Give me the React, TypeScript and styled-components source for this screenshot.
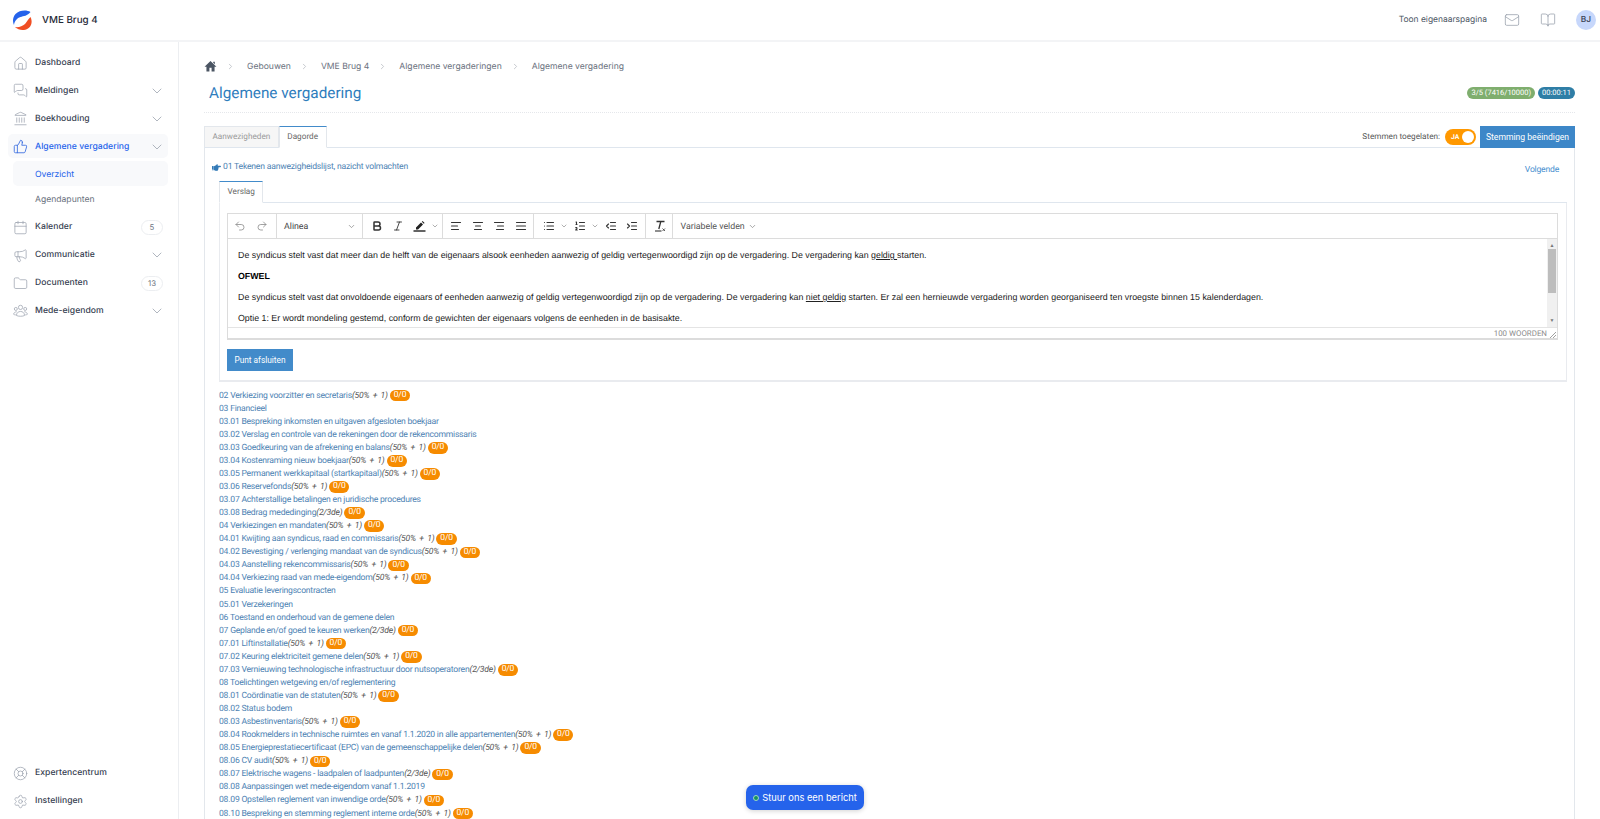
import React from "react";
import styled, { createGlobalStyle } from "styled-components";
import { FaHandPointRight } from "react-icons/fa";
import {
  AlignCenter,
  AlignJustify,
  AlignLeft,
  AlignRight,
  Bold,
  BookOpen,
  Calendar,
  ChevronDown,
  ChevronRight,
  Folder,
  Home,
  IndentDecrease,
  IndentIncrease,
  Italic,
  Landmark,
  LifeBuoy,
  List as ListIcon,
  ListOrdered,
  Mail,
  Megaphone,
  MessagesSquare,
  Redo2,
  Settings,
  ThumbsUp,
  Undo2,
} from "lucide-react";

const GlobalStyle = createGlobalStyle`
  html, body { margin: 0; padding: 0; background: #fff; }
  body {
    font-family: Roboto, "Liberation Sans", sans-serif;
    overflow: hidden;
    text-rendering: geometricPrecision;
  }
  * { box-sizing: border-box; }
`;

const Page = styled.div`
  width: 1600px;
  height: 819px;
  display: flex;
  flex-direction: column;
  overflow: hidden;
  position: relative;
`;

const Header = styled.header`
  height: 42px;
  flex: none;
  display: flex;
  align-items: center;
  border-bottom: 2px solid #f3f4f6;
  padding: 0 4px 0 12px;
`;

const Logo = styled.svg`
  width: 21px;
  height: 21px;
`;

const Brand = styled.div`
  margin-left: 9px;
  font: 500 9.8px Inter, sans-serif;
  color: #1f2937;
`;

const HeaderRight = styled.div`
  margin-left: auto;
  display: flex;
  align-items: center;
  color: #9ca3af;
`;

const OwnerLink = styled.span`
  font: 400 8.45px Inter, sans-serif;
  color: #4b5563;
  margin-right: 17px;
`;

const HeaderIcon = styled.span`
  display: flex;
  margin-right: 20px;
`;

const Avatar = styled.div`
  width: 20px;
  height: 20px;
  border-radius: 50%;
  background: #c7d7fb;
  color: #374151;
  font: 500 8.4px Inter, sans-serif;
  display: flex;
  align-items: center;
  justify-content: center;
`;

const Body = styled.div`
  flex: 1;
  min-height: 0;
  display: flex;
`;

const Sidebar = styled.aside`
  width: 179px;
  flex: none;
  border-right: 1px solid #eceef1;
  padding: 8px 10px 3px 8px;
  display: flex;
  flex-direction: column;
`;

const SideBottom = styled.div`
  margin-top: auto;
`;

const NavItem = styled.div<{ $active?: boolean }>`
  height: 24px;
  margin-bottom: 3.85px;
  padding: 2px 5px 0;
  border-radius: 5px;
  display: flex;
  align-items: center;
  background: ${({ $active }) => ($active ? "#f8f9fb" : "transparent")};
  color: ${({ $active }) => ($active ? "#2563eb" : "#374151")};
  font: 500 8.6px Inter, sans-serif;
  letter-spacing: 0.05px;
  svg.main {
    width: 15px;
    height: 15px;
    margin-right: 7px;
    flex: none;
    color: ${({ $active }) => ($active ? "#3b6fe0" : "#9ca3af")};
  }
  svg.chev {
    width: 16px;
    height: 16px;
    margin-left: auto;
    margin-right: -2px;
    color: #9ca3af;
  }
`;

const SubList = styled.div`
  margin-bottom: 3px;
`;

const SubItem = styled.div<{ $active?: boolean }>`
  height: 25px;
  margin: 0 0 0 5px;
  padding: 2px 0 0 22px;
  border-radius: 5px;
  display: flex;
  align-items: center;
  background: ${({ $active }) => ($active ? "#f8f9fb" : "transparent")};
  color: ${({ $active }) => ($active ? "#2563eb" : "#6b7280")};
  font: 400 8.6px Inter, sans-serif;
`;

const Count = styled.span`
  margin-left: auto;
  width: 22px;
  height: 15px;
  border: 1px solid #eceef1;
  border-radius: 8px;
  color: #6b7280;
  font: 400 7.8px Inter, sans-serif;
  display: flex;
  align-items: center;
  justify-content: center;
`;

const Main = styled.main`
  flex: 1;
  min-width: 0;
  padding: 0 25px 0 25px;
  overflow: hidden;
`;

const Breadcrumb = styled.div`
  height: 17px;
  margin-top: 16px;
  display: flex;
  align-items: center;
  color: #6b7280;
  font: 400 8.6px Inter, sans-serif;
  svg.sep { width: 9px; height: 9px; color: #b4b8bf; margin: 0 12px 0 9px; }
`;

const HomeGlyph = styled.svg`
  width: 13px;
  height: 13px;
  fill: #4b5563;
`;

const TitleRow = styled.div`
  height: 38px;
  padding: 0 0 0 5px;
  border-bottom: 1px dotted #e5e7eb;
  display: flex;
  align-items: center;
  justify-content: space-between;
`;

const Title = styled.h1`
  margin: -1px 0 0;
  font: 400 15.3px Roboto, sans-serif;
  color: #2f7dbd;
`;

const Pills = styled.div`
  display: flex;
  gap: 3px;
  margin-bottom: 2px;
`;

const Pill = styled.span<{ $color: string }>`
  height: 12px;
  padding: 0 4px;
  border-radius: 6px;
  background: ${({ $color }) => $color};
  color: #fff;
  font: 400 7.5px/12px Roboto, sans-serif;
`;

const TabRow = styled.div`
  height: 22px;
  margin-top: 13px;
  display: flex;
  align-items: flex-end;
  border-bottom: 1px solid #dfe6ee;
`;

const Tab = styled.div<{ $active?: boolean }>`
  height: 22px;
  margin-bottom: -1px;
  padding: 0 7.5px;
  display: flex;
  align-items: center;
  font: 400 8.2px Roboto, sans-serif;
  color: ${({ $active }) => ($active ? "#666" : "#9a9a9a")};
  background: ${({ $active }) => ($active ? "#fff" : "#f6f6f6")};
  border: 1px solid #e3e7ec;
  border-top: ${({ $active }) => ($active ? "1px solid #428bca" : "1px solid #e3e7ec")};
  border-bottom: ${({ $active }) => ($active ? "1px solid #fff" : "1px solid #dfe6ee")};
`;

const TabActions = styled.div`
  margin-left: auto;
  align-self: stretch;
  display: flex;
  align-items: center;
`;

const ToggleLabel = styled.span`
  font: 400 8.2px Roboto, sans-serif;
  color: #555;
  margin-right: 5px;
`;

const Toggle = styled.div`
  width: 31px;
  height: 16px;
  border-radius: 8px;
  background: #ff9800;
  color: #fff;
  font: 700 6.8px Roboto, sans-serif;
  display: flex;
  align-items: center;
  justify-content: space-between;
  padding: 0 2px 0 6px;
  margin-right: 4px;
  &::after {
    content: "";
    width: 12px;
    height: 12px;
    border-radius: 50%;
    background: #fff;
  }
`;

const EndButton = styled.button`
  height: 22px;
  width: 95px;
  border: none;
  background: #3d87c8;
  color: #fff;
  font: 400 8.6px Roboto, sans-serif;
  padding: 0;
`;

const Panel = styled.div`
  border-left: 1px solid #e3e7ec;
  border-right: 1px solid #e3e7ec;
  padding: 11px 7px 0 7px;
`;

const AgendaHead = styled.div`
  height: 14px;
  padding-top: 2px;
  display: flex;
  align-items: center;
  color: #4d82b3;
  font: 400 8.6px Roboto, sans-serif;
  letter-spacing: -0.2px;
  svg { width: 9px; height: 9px; color: #337ab7; margin-right: 2px; }
`;

const NextLink = styled.span`
  margin-left: auto;
  margin-right: 8px;
  margin-top: 6px;
  color: #4a90d0;
`;

const InnerTabs = styled.div`
  margin-top: 8px;
  margin-left: 7px;
  height: 22px;
  display: flex;
  border-bottom: 1px solid #dfe6ee;
`;

const InnerPanel = styled.div`
  margin-left: 7px;
  border: 1px solid #e9ebef;
  border-top: none;
  border-bottom-width: 2px;
  padding: 10px 8px 9px 7px;
`;

const Editor = styled.div`
  border: 1px solid #dcdcdc;
  border-bottom-width: 2px;
`;

const Toolbar = styled.div`
  height: 25px;
  display: flex;
  align-items: center;
  border-bottom: 1px solid #dcdcdc;
  color: #333;
  svg { width: 12px; height: 12px; flex: none; }
`;

const ToolGroup = styled.div<{ $gap?: number; $left?: number; $right?: number }>`
  height: 100%;
  display: flex;
  align-items: center;
  gap: ${({ $gap }) => $gap ?? 9}px;
  padding: 0 ${({ $right }) => $right ?? 7}px 0 ${({ $left }) => $left ?? 8}px;
  border-right: 1px solid #dcdcdc;
`;

const Caret = styled(ChevronDown)`
  && { width: 8px; height: 8px; color: #8a8a8a; margin: 0 -3px 0 -4px; }
`;

const PenIcon = styled.svg`
  && { width: 13px; height: 12px; }
`;

const FormatSelect = styled.div`
  width: 86px;
  height: 100%;
  padding: 1px 6px 0 7px;
  display: flex;
  align-items: center;
  justify-content: space-between;
  font: 400 8.8px Roboto, sans-serif;
  color: #444;
  border-right: 1px solid #dcdcdc;
  svg { width: 9px; height: 9px; color: #8a8a8a; }
`;

const VariableSelect = styled.div`
  padding: 1px 8px 0;
  display: flex;
  align-items: center;
  gap: 3px;
  font: 400 8.8px Roboto, sans-serif;
  color: #555;
  && svg { width: 9px; height: 9px; color: #8a8a8a; }
`;

const EditArea = styled.div`
  height: 89px;
  display: flex;
  border-bottom: 1px solid #e4e4e4;
  overflow: hidden;
`;

const EditText = styled.div`
  flex: 1;
  padding: 10px 10px 0;
  font: 400 8.83px/12px "Liberation Sans", sans-serif;
  color: #222;
  p { margin: 0 0 9px; white-space: nowrap; }
  b { color: #000; }
  u { text-underline-offset: 1px; }
`;

const ScrollBar = styled.div`
  width: 10px;
  background: #f0f0f0;
  display: flex;
  flex-direction: column;
  align-items: center;
  justify-content: space-between;
  padding: 4px 0 3px;
  color: #777;
  font-size: 5px;
  line-height: 6px;
  position: relative;
  &::after {
    content: "";
    position: absolute;
    left: 1px;
    right: 1px;
    top: 10px;
    height: 44px;
    background: #bdbdbd;
  }
`;

const StatusBar = styled.div`
  height: 10px;
  display: flex;
  justify-content: flex-end;
  align-items: center;
  padding-right: 10px;
  font: 400 7.9px Roboto, sans-serif;
  color: #8b8b8b;
  position: relative;
`;

const Grip = styled.svg`
  position: absolute;
  right: 1px;
  bottom: 0;
  width: 7px;
  height: 7px;
`;

const CloseButton = styled.button`
  display: block;
  margin-top: 9px;
  width: 66px;
  height: 22px;
  border: none;
  background: #428bca;
  color: #fff;
  font: 400 8.3px Roboto, sans-serif;
  padding: 0;
`;

const AgendaList = styled.div`
  margin: 7px 0 0 7px;
  font: 400 8.6px Roboto, sans-serif;
  letter-spacing: -0.22px;
  color: #4d82b3;
`;

const AgendaRow = styled.div`
  height: 13.07px;
  display: flex;
  align-items: center;
  white-space: pre;
  em { color: #555; font-style: italic; word-spacing: 1.5px; }
`;

const Score = styled.span`
  margin-left: 2px;
  height: 11.5px;
  padding: 0 4px;
  border-radius: 6px;
  background: #f68b00;
  color: #fff;
  font: 400 8.5px/11.5px Roboto, sans-serif;
`;

const ChatButton = styled.button`
  position: absolute;
  left: 746px;
  bottom: 9px;
  width: 118px;
  height: 25px;
  border: none;
  border-radius: 7px;
  background: #2563eb;
  color: #fff;
  font: 400 9.3px Inter, sans-serif;
  display: flex;
  align-items: center;
  justify-content: center;
  gap: 3px;
  box-shadow: 0 1px 5px rgba(0, 0, 0, 0.18);
  padding: 0;
`;

const Dot = styled.span`
  width: 6px;
  height: 6px;
  border-radius: 50%;
  background: #16915f;
  border: 1px solid #9fd8c0;
`;

const agenda: [string, string?][] = [
  ["02 Verkiezing voorzitter en secretaris", "50% + 1"],
  ["03 Financieel"],
  ["03.01 Bespreking inkomsten en uitgaven afgesloten boekjaar"],
  ["03.02 Verslag en controle van de rekeningen door de rekencommissaris"],
  ["03.03 Goedkeuring van de afrekening en balans", "50% + 1"],
  ["03.04 Kostenraming nieuw boekjaar", "50% + 1"],
  ["03.05 Permanent werkkapitaal (startkapitaal)", "50% + 1"],
  ["03.06 Reservefonds", "50% + 1"],
  ["03.07 Achterstallige betalingen en juridische procedures"],
  ["03.08 Bedrag mededinging", "2/3de"],
  ["04 Verkiezingen en mandaten", "50% + 1"],
  ["04.01 Kwijting aan syndicus, raad en commissaris", "50% + 1"],
  ["04.02 Bevestiging / verlenging mandaat van de syndicus", "50% + 1"],
  ["04.03 Aanstelling rekencommissaris", "50% + 1"],
  ["04.04 Verkiezing raad van mede-eigendom", "50% + 1"],
  ["05 Evaluatie leveringscontracten"],
  ["05.01 Verzekeringen"],
  ["06 Toestand en onderhoud van de gemene delen"],
  ["07 Geplande en/of goed te keuren werken", "2/3de"],
  ["07.01 Liftinstallatie", "50% + 1"],
  ["07.02 Keuring elektriciteit gemene delen", "50% + 1"],
  ["07.03 Vernieuwing technologische infrastructuur door nutsoperatoren", "2/3de"],
  ["08 Toelichtingen wetgeving en/of reglementering"],
  ["08.01 Coördinatie van de statuten", "50% + 1"],
  ["08.02 Status bodem"],
  ["08.03 Asbestinventaris", "50% + 1"],
  ["08.04 Rookmelders in technische ruimtes en vanaf 1.1.2020 in alle appartementen", "50% + 1"],
  ["08.05 Energieprestatiecertificaat (EPC) van de gemeenschappelijke delen", "50% + 1"],
  ["08.06 CV audit", "50% + 1"],
  ["08.07 Elektrische wagens - laadpalen of laadpunten", "2/3de"],
  ["08.08 Aanpassingen wet mede-eigendom vanaf 1.1.2019"],
  ["08.09 Opstellen reglement van inwendige orde", "50% + 1"],
  ["08.10 Bespreking en stemming reglement interne orde", "50% + 1"],
];

const crumbs = ["Gebouwen", "VME Brug 4", "Algemene vergaderingen", "Algemene vergadering"];

// three people, lucide has no matching group icon
function GroupIcon() {
  return (
    <svg className="main" viewBox="0 0 24 24" fill="none" stroke="currentColor" strokeWidth="1.2">
      <circle cx="12" cy="7" r="3.4" />
      <circle cx="4.5" cy="9.5" r="2.4" />
      <circle cx="19.5" cy="9.5" r="2.4" />
      <path d="M5.5 20c0-4 3-6.5 6.5-6.5s6.5 2.5 6.5 6.5c-3 1.6-10 1.6-13 0Z" />
      <path d="M6 14c-2.500 0-4.500 1.500-5 4 1 .7 2 1 3.500 1.100M18 14c2.500 0 4.500 1.500 5 4-1 .7-2 1-3.500 1.100" />
    </svg>
  );
}

export default function App() {
  return (
    <Page>
      <GlobalStyle />
      <Header>
        <Logo viewBox="0 0 20 21">
          <path d="M18 2 C14 -0.5 7 0 3 4 C0 7.500 0 12 1.500 15 C2 11 4.500 8 8 7 C11 6 15 6 18 2Z" fill="#2563eb" />
          <path d="M18 7 C20 11 19.500 16 15.500 18.500 C11.500 21 6 20.500 2.500 17 C6 17.500 10 16.500 12.500 14 C14.500 12 15.500 9 18 7Z" fill="#f04e23" />
        </Logo>
        <Brand>VME Brug 4</Brand>
        <HeaderRight>
          <OwnerLink>Toon eigenaarspagina</OwnerLink>
          <HeaderIcon><Mail size={16} strokeWidth={1.2} /></HeaderIcon>
          <HeaderIcon><BookOpen size={16} strokeWidth={1.2} /></HeaderIcon>
          <Avatar>BJ</Avatar>
        </HeaderRight>
      </Header>
      <Body>
        <Sidebar>
          <NavItem><Home className="main" strokeWidth={1.2} />Dashboard</NavItem>
          <NavItem><MessagesSquare className="main" strokeWidth={1.2} />Meldingen<ChevronDown className="chev" strokeWidth={1.2} /></NavItem>
          <NavItem><Landmark className="main" strokeWidth={1.2} />Boekhouding<ChevronDown className="chev" strokeWidth={1.2} /></NavItem>
          <NavItem $active><ThumbsUp className="main" strokeWidth={1.4} />Algemene vergadering<ChevronDown className="chev" strokeWidth={1.2} /></NavItem>
          <SubList>
            <SubItem $active>Overzicht</SubItem>
            <SubItem>Agendapunten</SubItem>
          </SubList>
          <NavItem><Calendar className="main" strokeWidth={1.2} />Kalender<Count>5</Count></NavItem>
          <NavItem><Megaphone className="main" strokeWidth={1.2} />Communicatie<ChevronDown className="chev" strokeWidth={1.2} /></NavItem>
          <NavItem><Folder className="main" strokeWidth={1.2} />Documenten<Count>13</Count></NavItem>
          <NavItem><GroupIcon />Mede-eigendom<ChevronDown className="chev" strokeWidth={1.2} /></NavItem>
          <SideBottom>
            <NavItem><LifeBuoy className="main" strokeWidth={1.2} />Expertencentrum</NavItem>
            <NavItem><Settings className="main" strokeWidth={1.2} />Instellingen</NavItem>
          </SideBottom>
        </Sidebar>
        <Main>
          <Breadcrumb>
            <HomeGlyph viewBox="0 0 24 24"><path d="M10 21v-6.500h4V21h5.500v-8.500H23L12 2 1 12.500h3.500V21zM17 3h3v5l-3-3z" /></HomeGlyph>
            {crumbs.map((c) => (
              <React.Fragment key={c}>
                <ChevronRight className="sep" />
                {c}
              </React.Fragment>
            ))}
          </Breadcrumb>
          <TitleRow>
            <Title>Algemene vergadering</Title>
            <Pills>
              <Pill $color="#7fae6e">3/5 (7416/10000)</Pill>
              <Pill $color="#2f7ea6">00:00:11</Pill>
            </Pills>
          </TitleRow>
          <TabRow>
            <Tab>Aanwezigheden</Tab>
            <Tab $active>Dagorde</Tab>
            <TabActions>
              <ToggleLabel>Stemmen toegelaten:</ToggleLabel>
              <Toggle>JA</Toggle>
              <EndButton>Stemming beëindigen</EndButton>
            </TabActions>
          </TabRow>
          <Panel>
            <AgendaHead>
              <FaHandPointRight />
              01 Tekenen aanwezigheidslijst, nazicht volmachten
              <NextLink>Volgende</NextLink>
            </AgendaHead>
            <InnerTabs><Tab $active>Verslag</Tab></InnerTabs>
            <InnerPanel>
              <Editor>
                <Toolbar>
                  <ToolGroup $gap={10} $left={6} $right={8}>
                    <Undo2 color="#8a8a8a" strokeWidth={1.6} />
                    <Redo2 color="#8a8a8a" strokeWidth={1.6} />
                  </ToolGroup>
                  <FormatSelect>Alinea<ChevronDown /></FormatSelect>
                  <ToolGroup $left={8} $right={6}>
                    <Bold strokeWidth={3} />
                    <Italic strokeWidth={1.8} />
                    <PenIcon viewBox="0 0 13 12">
                      <path d="M3 7.500 8 2.500l2 2-5 5H3zM8.800 1.700 9.600 1l2 2-.8.800z" fill="#222" />
                      <path d="M0.500 11h12" stroke="#222" strokeWidth="1.400" />
                    </PenIcon>
                    <Caret />
                  </ToolGroup>
                  <ToolGroup $gap={9.500} $left={7} $right={6}>
                    <AlignLeft strokeWidth={2.2} />
                    <AlignCenter strokeWidth={2.2} />
                    <AlignRight strokeWidth={2.2} />
                    <AlignJustify strokeWidth={2.2} />
                  </ToolGroup>
                  <ToolGroup $left={9}>
                    <ListIcon strokeWidth={2.2} />
                    <Caret />
                    <ListOrdered strokeWidth={2.2} />
                    <Caret />
                    <IndentDecrease strokeWidth={2.2} />
                    <IndentIncrease strokeWidth={2.2} />
                  </ToolGroup>
                  <ToolGroup $right={6}>
                    <svg viewBox="0 0 12 12" fill="none" stroke="#333">
                      <path d="M2.500 1.500h8M6.800 1.500 4.800 9" strokeWidth="1.300" />
                      <path d="M1 11h6.500" strokeWidth="1.100" />
                      <path d="M8.500 8.500l2.500 2.500M11 8.500l-2.500 2.500" strokeWidth="0.800" />
                    </svg>
                  </ToolGroup>
                  <VariableSelect>Variabele velden<ChevronDown /></VariableSelect>
                </Toolbar>
                <EditArea>
                  <EditText>
                    <p>De syndicus stelt vast dat meer dan de helft van de eigenaars alsook eenheden aanwezig of geldig vertegenwoordigd zijn op de vergadering. De vergadering kan <u>geldig </u>starten.</p>
                    <p><b>OFWEL</b></p>
                    <p>De syndicus stelt vast dat onvoldoende eigenaars of eenheden aanwezig of geldig vertegenwoordigd zijn op de vergadering. De vergadering kan <u>niet geldig</u> starten. Er zal een hernieuwde vergadering worden georganiseerd ten vroegste binnen 15 kalenderdagen.</p>
                    <p>Optie 1: Er wordt mondeling gestemd, conform de gewichten der eigenaars volgens de eenheden in de basisakte.</p>
                  </EditText>
                  <ScrollBar><span>▲</span><span>▼</span></ScrollBar>
                </EditArea>
                <StatusBar>
                  100 WOORDEN
                  <Grip viewBox="0 0 7 7"><path d="M1 7 L7 1 M4 7 L7 4" stroke="#888" strokeWidth="0.8" /></Grip>
                </StatusBar>
              </Editor>
              <CloseButton>Punt afsluiten</CloseButton>
            </InnerPanel>
            <AgendaList>
              {agenda.map(([label, rule]) => (
                <AgendaRow key={label}>
                  {label}
                  {rule && <em>({rule})</em>}
                  {rule && <Score>0/0</Score>}
                </AgendaRow>
              ))}
            </AgendaList>
          </Panel>
        </Main>
      </Body>
      <ChatButton><Dot />Stuur ons een bericht</ChatButton>
    </Page>
  );
}
